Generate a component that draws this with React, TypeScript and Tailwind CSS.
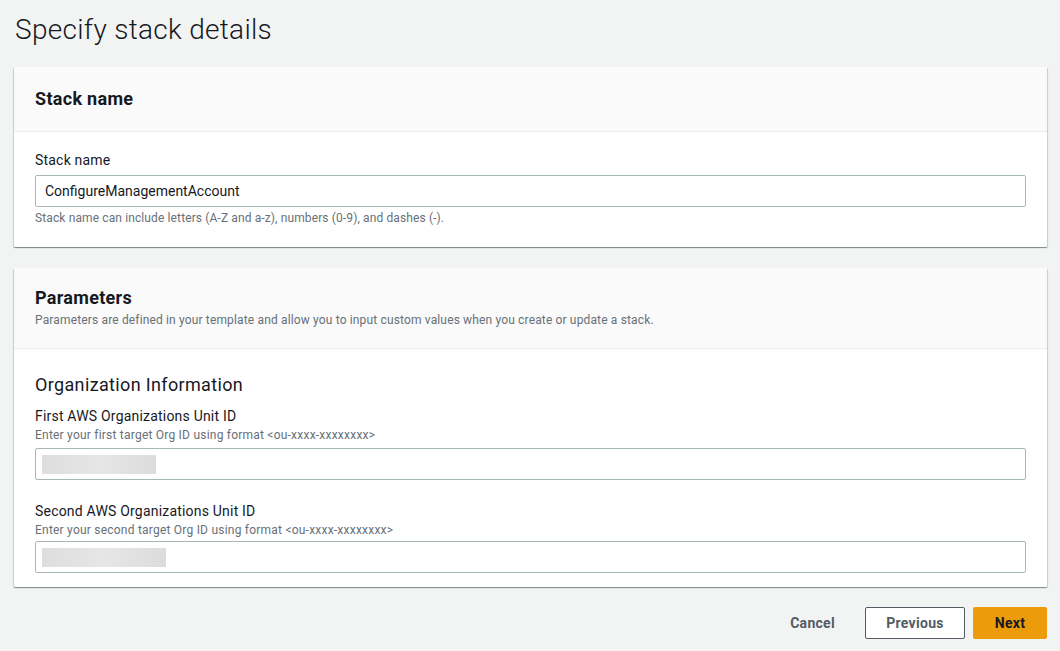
import React from 'react';

const font = { fontFamily: 'Roboto, "Liberation Sans", Arial, sans-serif' };

const Card = ({ header, children }: { header: React.ReactNode; children: React.ReactNode }) => (
  <div className="mx-[14px] mr-[13px] bg-white rounded-[1px] shadow-[0_1px_1px_0_rgba(0,28,36,0.3),1px_1px_1px_0_rgba(0,28,36,0.15),-1px_1px_1px_0_rgba(0,28,36,0.15)]">
    <div className="bg-[#fafafa] border-b border-[#eaeded] px-[21px]">{header}</div>
    <div className="px-[21px]">{children}</div>
  </div>
);

const Redacted = ({ w }: { w: string }) => (
  <div className={`${w} h-[19px] bg-gradient-to-r from-[#dedede] via-[#e6e6e6] to-[#dcdcdc]`} />
);

export default function App() {
  return (
    <div className="w-[1060px] h-[651px] bg-[#f2f3f3] text-[#16191f] overflow-hidden" style={font}>
      <h1 className="pl-[15px] pt-[12px] h-[67px] text-[28px] font-light leading-[36px] tracking-[0.3px]">Specify stack details</h1>

      <Card
        header={
          <div className="h-[64px] flex items-center">
            <h2 className="text-[18px] font-bold leading-[22px] tracking-[0.3px]">Stack name</h2>
          </div>
        }
      >
        <div className="pt-[17px] pb-[21px]">
          <label className="block text-[14px] leading-[22px] tracking-[0.2px]">Stack name</label>
          <div className="mt-[4px] h-[32px] border border-[#aab7b8] rounded-[2px] flex items-center px-[9px] text-[14px]">
            ConfigureManagementAccount
          </div>
          <p className="mt-[3px] text-[12px] leading-[16px] text-[#687078] tracking-[0.12px]">
            Stack name can include letters (A-Z and a-z), numbers (0-9), and dashes (-).
          </p>
        </div>
      </Card>

      <div className="h-[21px]" />

      <Card
        header={
          <div className="h-[80px] pt-[19px]">
            <h2 className="text-[18px] font-bold leading-[22px] tracking-[0.3px]">Parameters</h2>
            <p className="mt-[3px] text-[12px] leading-[16px] text-[#687078] tracking-[0.15px]">
              Parameters are defined in your template and allow you to input custom values when you create or update a stack.
            </p>
          </div>
        }
      >
        <div className="pt-[23px] pb-[14px]">
          <h3 className="text-[18px] font-normal leading-[26px] tracking-[0.35px]">Organization Information</h3>
          <label className="block mt-[8px] text-[14px] leading-[21px] tracking-[0.2px]">First AWS Organizations Unit ID</label>
          <p className="text-[12px] leading-[16px] text-[#687078] tracking-[0.22px]">Enter your first target Org ID using format &lt;ou-xxxx-xxxxxxxx&gt;</p>
          <div className="mt-[5px] h-[32px] border border-[#aab7b8] rounded-[2px] flex items-center px-[6px]">
            <Redacted w="w-[114px]" />
          </div>
          <label className="block mt-[20px] text-[14px] leading-[22px] tracking-[0.2px]">Second AWS Organizations Unit ID</label>
          <p className="text-[12px] leading-[16px] text-[#687078] tracking-[0.22px]">Enter your second target Org ID using format &lt;ou-xxxx-xxxxxxxx&gt;</p>
          <div className="mt-[3px] h-[32px] border border-[#aab7b8] rounded-[2px] flex items-center px-[6px]">
            <Redacted w="w-[124px]" />
          </div>
        </div>
      </Card>

      <div className="flex justify-end items-center gap-[8px] mr-[13px] mt-[20px]">
        <button className="h-[32px] px-[22px] text-[14px] font-bold text-[#545b64] tracking-[0.3px]">Cancel</button>
        <button className="h-[32px] w-[100px] bg-white border border-[#545b64] rounded-[2px] text-[14px] font-bold text-[#545b64] tracking-[0.3px]">Previous</button>
        <button className="h-[32px] w-[74px] bg-[#ec9b0b] rounded-[2px] text-[14px] font-bold text-[#16191f] tracking-[0.3px]">Next</button>
      </div>
    </div>
  );
}
